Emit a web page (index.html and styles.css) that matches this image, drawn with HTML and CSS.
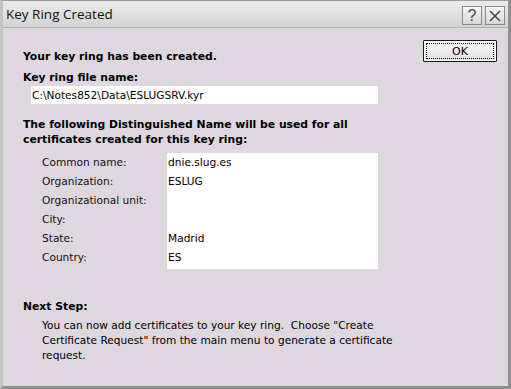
FILE: index.html
```html
<!DOCTYPE html>
<html>
<head>
	<title>Key Ring Created</title>
	<meta charset="utf-8">
	<link rel="stylesheet" href="styles.css">
</head>
<body>
	<div class="window">
		<div class="titlebar">
			<span class="title">Key Ring Created</span>
			<div class="caption-buttons">
				<span class="cap-btn cap-help">?</span>
				<span class="cap-btn">
					<svg width="12" height="12" viewBox="0 0 12 12">
						<path d="M1 1 L11 11 M11 1 L1 11" stroke="#4a4a4a" stroke-width="1.6" fill="none" />
					</svg>
				</span>
			</div>
		</div>

		<div class="client">
			<div class="main">
				<p class="bold">Your key ring has been created.</p>
				<p class="bold label-file">Key ring file name:</p>
				<div class="field-file">C:\Notes852\Data\ESLUGSRV.kyr</div>

				<p class="bold heading">The following Distinguished Name will be used for all certificates created for this key ring:</p>

				<div class="dn">
					<div class="dn-labels">
						<div>Common name:</div>
						<div>Organization:</div>
						<div>Organizational unit:</div>
						<div>City:</div>
						<div>State:</div>
						<div>Country:</div>
					</div>
					<div class="dn-values">
						<div>dnie.slug.es</div>
						<div>ESLUG</div>
						<div>&nbsp;</div>
						<div>&nbsp;</div>
						<div>Madrid</div>
						<div>ES</div>
					</div>
				</div>

				<p class="bold next">Next Step:</p>
				<p class="desc">You can now add certificates to your key ring.&nbsp; Choose "Create Certificate Request" from the main menu to generate a certificate request.</p>
			</div>

			<div class="actions">
				<button class="ok"><span class="ok-focus">OK</span></button>
			</div>
		</div>
	</div>
</body>
</html>
```

FILE: styles.css
```css
html, body {
	margin: 0;
	padding: 0;
}

body {
	background-color: #ded7e0;
	font-family: "DejaVu Sans", Verdana, sans-serif;
	font-size: 10.6px;
	line-height: 15px;
	color: #000;
}

p {
	margin: 0;
}

.window {
	box-sizing: border-box;
	width: 511px;
	height: 389px;
	background-color: #ded7e0;
	border-top: 1px solid #9c9c9c;
	border-left: 3px solid #c4c4c4;
	border-right: 3px solid #8f8f8f;
	border-bottom: 3px solid #8f8f8f;
	display: flex;
	flex-direction: column;
}

/* title bar */
.titlebar {
	height: 26px;
	border-bottom: 1px solid #b0b0b0;
	background: linear-gradient(#ececec, #d3d3d3);
	display: flex;
	align-items: center;
	justify-content: space-between;
	padding: 0 3px 0 3px;
}

.title {
	font-family: "Open Sans", "Liberation Sans", sans-serif;
	font-size: 13.5px;
	color: #111;
}

.caption-buttons {
	display: flex;
	gap: 3px;
	margin-top: 3px;
}

.cap-btn {
	box-sizing: border-box;
	width: 20px;
	height: 19px;
	border: 1px solid #8a8a8a;
	background: linear-gradient(#f6f6f6, #d6d6d6);
	display: flex;
	align-items: center;
	justify-content: center;
}

.cap-help {
	font-family: "Liberation Sans", sans-serif;
	font-size: 16px;
	color: #4a4a4a;
}

/* client area */
.client {
	flex: 1;
	display: flex;
	padding-top: 12px;
}

.main {
	width: 378px;
	padding-left: 20px;
	padding-top: 9px;
}

.bold {
	font-weight: bold;
	font-size: 10.8px;
}

.label-file {
	margin-top: 6px;
}

.field-file {
	margin: 1px 0 0 8px;
	width: 346px;
	height: 18px;
	line-height: 18px;
	padding-left: 1px;
	background-color: #fff;
}

.heading {
	margin-top: 13px;
}

.dn {
	display: flex;
	margin: 6px 0 0 19px;
	line-height: 19px;
}

.dn-labels {
	width: 125px;
	color: #111;
}

.dn-values {
	width: 210px;
	padding: 0 0 2px 1px;
	background-color: #fff;
}

.next {
	margin-top: 30px;
}

.desc {
	margin-top: 4px;
	padding-left: 19px;
}

/* buttons */
.actions {
	padding-left: 22px;
}

.ok {
	box-sizing: border-box;
	width: 74px;
	height: 22px;
	padding: 0;
	border: 1px solid #1a1a1a;
	border-radius: 1px;
	background: linear-gradient(#f7f7f7, #e2e2e2);
	box-shadow: inset 0 0 0 1px #fdfdfd;
	font-family: "DejaVu Sans", sans-serif;
	font-size: 11px;
	color: #000;
	display: flex;
	align-items: stretch;
}

.ok-focus {
	flex: 1;
	margin: 2px;
	border: 1px dotted #000;
	display: flex;
	align-items: center;
	justify-content: center;
}
```
